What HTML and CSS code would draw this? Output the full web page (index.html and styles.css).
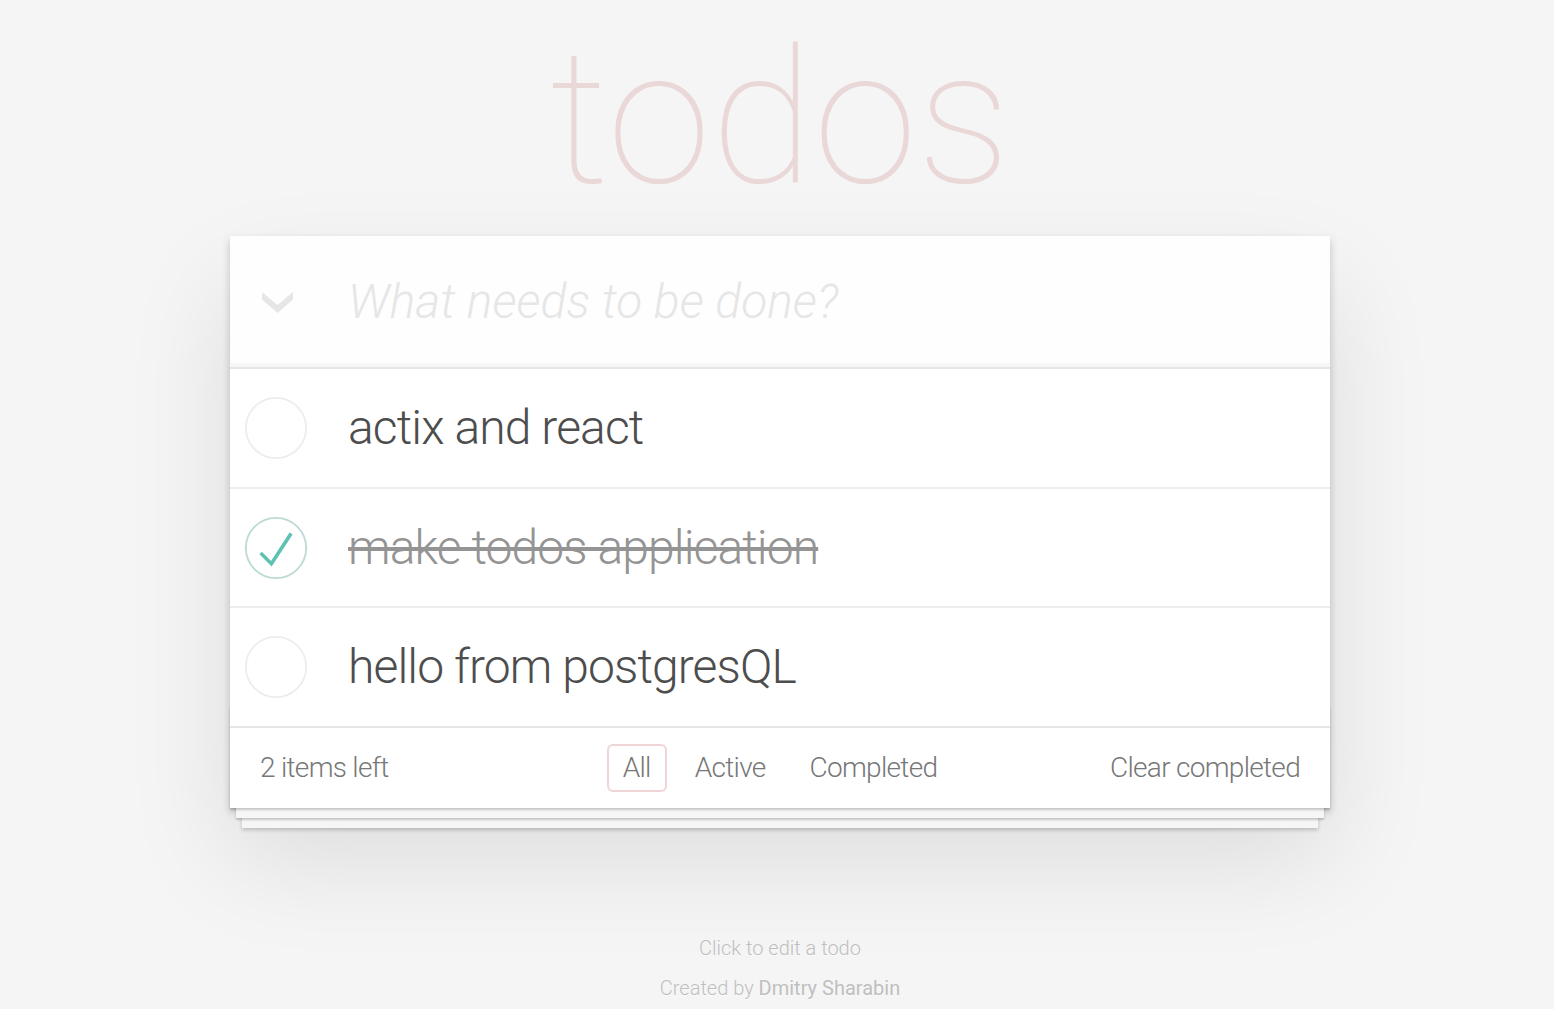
FILE: index.html
```html
<!DOCTYPE html>
<html lang="en">
<head>
<meta charset="utf-8">
<title>todos</title>
<link rel="stylesheet" href="styles.css">
</head>
<body>
<section class="page">
  <h1 class="title">todos</h1>
  <div class="todoapp">
    <header class="new-todo">
      <div class="toggle-all">
        <svg width="31" height="21" viewBox="0 0 31 21"><polygon points="0,0 15.5,13 31,0 31,7.5 15.5,21 0,7.5" fill="#e6e6e6"/></svg>
      </div>
      <div class="placeholder">What needs to be done?</div>
    </header>
    <ul class="todo-list">
      <li class="todo">
        <div class="toggle">
          <svg width="64" height="64" viewBox="-2 -2 104 104"><circle cx="50" cy="50" r="49" fill="none" stroke="#ededed" stroke-width="3"/></svg>
        </div>
        <span class="label">actix and react</span>
      </li>
      <li class="todo completed">
        <div class="toggle">
          <svg width="64" height="64" viewBox="-2 -2 104 104"><circle cx="50" cy="50" r="49" fill="none" stroke="#bddad5" stroke-width="3"/><path d="M72 25L42 71 27 56l-4 4 20 20 34-52z" fill="#5dc2af"/></svg>
        </div>
        <span class="label">make todos application</span>
      </li>
      <li class="todo">
        <div class="toggle">
          <svg width="64" height="64" viewBox="-2 -2 104 104"><circle cx="50" cy="50" r="49" fill="none" stroke="#ededed" stroke-width="3"/></svg>
        </div>
        <span class="label">hello from postgresQL</span>
      </li>
    </ul>
    <footer class="footer">
      <span class="todo-count">2 items left</span>
      <ul class="filters">
        <li><a class="filter selected">All</a></li>
        <li><a class="filter">Active</a></li>
        <li><a class="filter">Completed</a></li>
      </ul>
      <span class="clear-completed">Clear completed</span>
    </footer>
  </div>
  <footer class="info">
    <p>Click to edit a todo</p>
    <p>Created by <a class="author">Dmitry Sharabin</a></p>
  </footer>
</section>
</body>
</html>
```
FILE: styles.css
```css
html, body {
  margin: 0;
  padding: 0;
}
body {
  background: #f5f5f5;
  color: #4d4d4d;
  font-family: Roboto, "Liberation Sans", sans-serif;
  font-weight: 300;
  font-size: 28px;
  line-height: 39.2px;
  letter-spacing: -0.032em;
}
.page {
  width: 1100px;
  margin: 0 auto;
  padding-left: 6px;
}
ul { list-style: none; margin: 0; padding: 0; }

.title {
  margin: 24px 0 24px;
  height: 188px;
  font-size: 188px;
  line-height: 188px;
  font-weight: 100;
  letter-spacing: 0;
  text-align: center;
  color: rgba(175, 47, 47, 0.15);
}

.todoapp {
  background: #fff;
  position: relative;
  box-shadow: 0 4px 8px rgba(0, 0, 0, 0.2), 0 50px 100px rgba(0, 0, 0, 0.1);
}

.new-todo {
  display: flex;
  align-items: center;
  height: 131.2px;
  box-sizing: border-box;
  padding: 32px 32px 32px 0;
  background: rgba(0, 0, 0, 0.003);
  box-shadow: inset 0 -4px 2px rgba(0, 0, 0, 0.03);
}
.toggle-all {
  width: 120px;
  flex: none;
  display: flex;
  align-items: center;
  padding-left: 32px;
  box-sizing: border-box;
  margin-top: 2px;
}
.toggle-all svg { display: block; }
.placeholder {
  font-size: 48px;
  line-height: 67.2px;
  font-style: italic;
  font-weight: 300;
  letter-spacing: 0;
  margin-left: -2px;
  color: #e6e6e6;
}

.todo-list {
  border-top: 2px solid #e6e6e6;
}
.todo {
  display: flex;
  align-items: center;
  border-bottom: 2px solid #ededed;
  font-size: 48px;
}
.todo:last-child { border-bottom: none; }
.toggle {
  width: 120px;
  flex: none;
  padding-left: 14px;
  box-sizing: border-box;
  display: flex;
  align-items: center;
}
.toggle svg { display: block; }
.label {
  padding: 30px 30px 30px 0;
  margin-left: -2px;
  line-height: 57.6px;
  color: #4d4d4d;
}
.completed .label {
  color: #949494;
  text-decoration: line-through;
  text-decoration-thickness: 4px;
}

.footer {
  position: relative;
  display: grid;
  grid-template-columns: 1fr auto 1fr;
  align-items: center;
  height: 40px;
  padding: 16px 30px 24px;
  border-top: 2px solid #e6e6e6;
  color: #777;
  font-size: 28px;
  letter-spacing: -0.025em;
}
.footer::before {
  content: "";
  position: absolute;
  left: 0;
  right: 0;
  bottom: 0;
  height: 100px;
  overflow: hidden;
  box-shadow: 0 2px 2px rgba(0, 0, 0, 0.2),
              0 16px 0 -6px #f6f6f6,
              0 18px 2px -6px rgba(0, 0, 0, 0.2),
              0 32px 0 -12px #f6f6f6,
              0 34px 4px -12px rgba(0, 0, 0, 0.2);
  pointer-events: none;
}
.todo-count { justify-self: start; }
.filters {
  display: flex;
  gap: 12px;
}
.filter {
  display: block;
  padding: 6px 14px;
  line-height: 32px;
  border: 2px solid transparent;
  border-radius: 6px;
  color: inherit;
}
.filter.selected { border-color: rgba(175, 47, 47, 0.2); }
.clear-completed { justify-self: end; }

.info {
  padding-top: 130px;
  color: #bfbfbf;
  font-size: 20px;
  line-height: 20px;
  letter-spacing: 0;
  text-align: center;
  text-shadow: 0 1px 0 rgba(255, 255, 255, 0.5);
}
.info p { margin: 0 0 20px; }
.author { font-weight: 400; color: inherit; }
```
